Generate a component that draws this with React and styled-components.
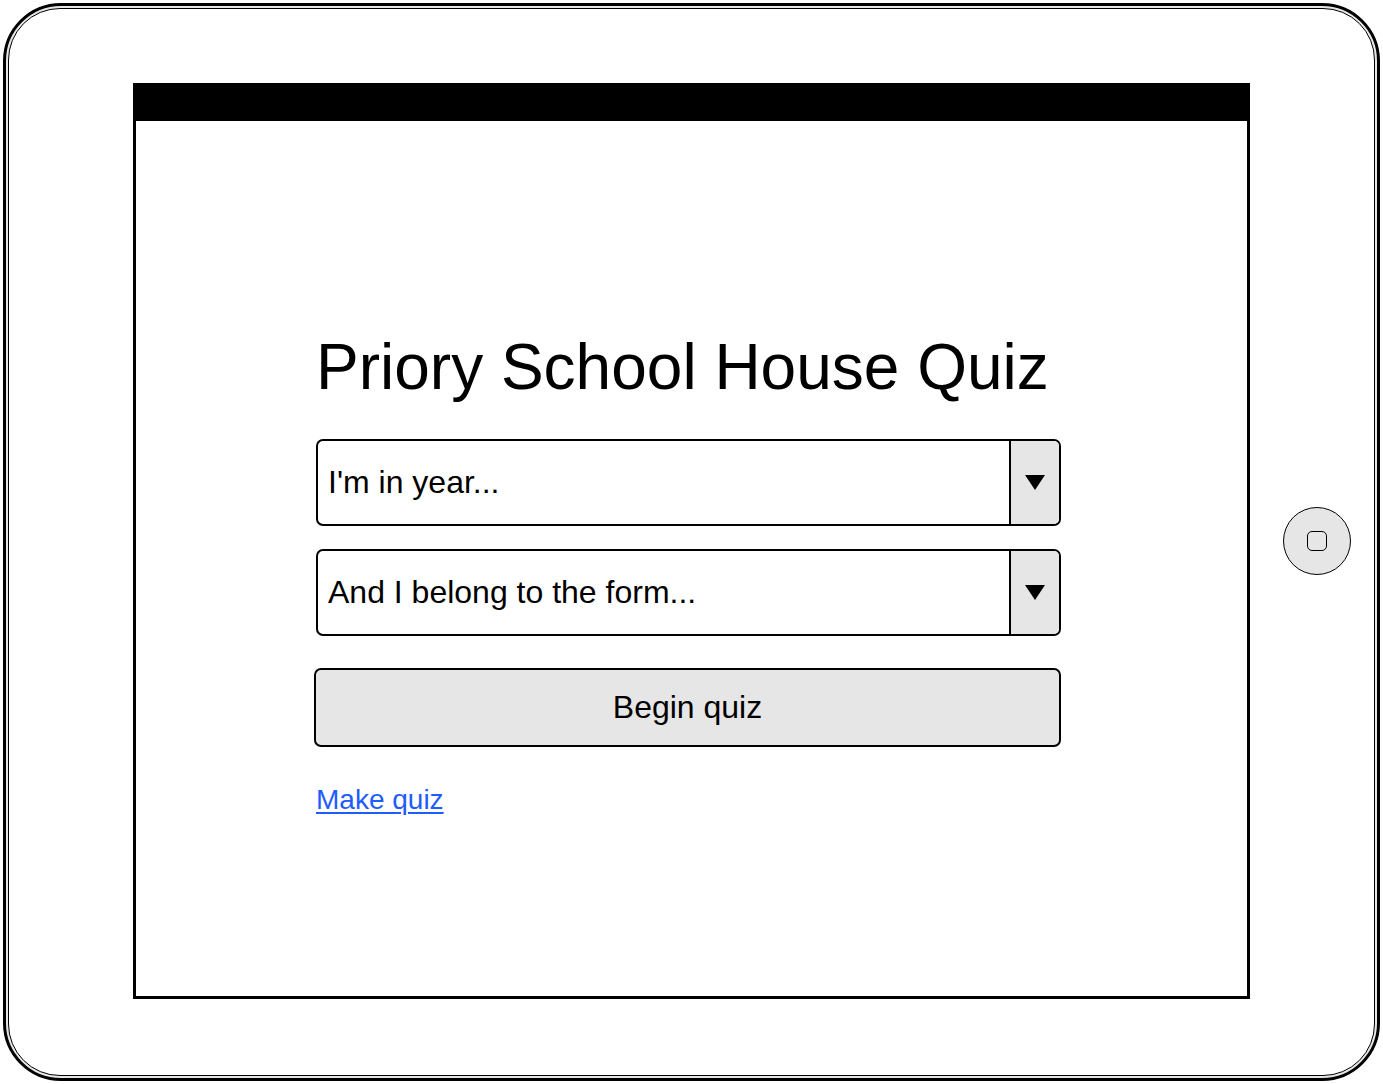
import React from 'react';
import styled, { createGlobalStyle } from 'styled-components';

const GlobalStyle = createGlobalStyle`
  html, body {
    margin: 0;
    padding: 0;
    background: #fff;
  }
  body {
    font-family: "Liberation Sans", Arial, sans-serif;
    color: #000;
  }
`;

const Page = styled.div`
  width: 1383px;
  height: 1084px;
  padding: 3px;
  box-sizing: border-box;
`;

const Device = styled.div`
  height: 100%;
  box-sizing: border-box;
  border: 3px solid #000;
  border-radius: 58px;
  background: #e6e6e6;
  padding: 2px;
`;

const DeviceInner = styled.div`
  height: 100%;
  box-sizing: border-box;
  border: 1.5px solid #000;
  border-radius: 52px;
  background: #fff;
  display: flex;
  align-items: center;
  padding-left: 124px;
  padding-bottom: 3px;
`;

const Screen = styled.div`
  width: 1117px;
  height: 916px;
  box-sizing: border-box;
  border: 3px solid #000;
  display: flex;
  flex-direction: column;
`;

const StatusBar = styled.div`
  height: 35px;
  background: #000;
`;

const Content = styled.div`
  flex: 1;
  display: flex;
  flex-direction: column;
  align-items: flex-start;
  padding: 209px 0 0 180px;
`;

const Title = styled.h1`
  margin: 0 0 35px;
  font-size: 64px;
  font-weight: normal;
  line-height: normal;
`;

const Select = styled.div`
  width: 745px;
  height: 87px;
  box-sizing: border-box;
  border: 2px solid #000;
  border-radius: 7px;
  display: flex;
  overflow: hidden;
  margin-bottom: ${(p) => p.$gap}px;
`;

const SelectLabel = styled.div`
  flex: 1;
  display: flex;
  align-items: center;
  padding-left: 10px;
  font-size: 32px;
`;

const SelectArrow = styled.div`
  width: 48px;
  border-left: 2px solid #000;
  background: #e6e6e6;
  display: flex;
  align-items: center;
  justify-content: center;
  &::after {
    content: '';
    border-left: 10px solid transparent;
    border-right: 10px solid transparent;
    border-top: 15px solid #000;
  }
`;

const BeginButton = styled.button`
  width: 747px;
  height: 79px;
  margin-left: -2px;
  box-sizing: border-box;
  border: 2px solid #000;
  border-radius: 7px;
  background: #e6e6e6;
  font-family: "Liberation Sans", Arial, sans-serif;
  font-size: 32px;
  color: #000;
  padding: 0;
  margin-bottom: 37px;
`;

const Link = styled.a`
  font-size: 28px;
  color: #1f5cff;
  text-decoration: underline;
  text-underline-offset: 3px;
  text-decoration-thickness: 2px;
`;

const Side = styled.div`
  flex: 1;
  display: flex;
  justify-content: center;
  padding-left: 9px;
`;

const HomeButton = styled.div`
  width: 68px;
  height: 68px;
  box-sizing: border-box;
  border: 1.5px solid #000;
  border-radius: 50%;
  background: #e6e6e6;
  display: flex;
  align-items: center;
  justify-content: center;
  &::after {
    content: '';
    width: 20px;
    height: 20px;
    box-sizing: border-box;
    border: 1.5px solid #000;
    border-radius: 5px;
  }
`;

export default function App() {
  return (
    <>
      <GlobalStyle />
      <Page>
        <Device>
          <DeviceInner>
            <Screen>
              <StatusBar />
              <Content>
                <Title>Priory School House Quiz</Title>
                <Select $gap={23}>
                  <SelectLabel>I'm in year...</SelectLabel>
                  <SelectArrow />
                </Select>
                <Select $gap={32}>
                  <SelectLabel>And I belong to the form...</SelectLabel>
                  <SelectArrow />
                </Select>
                <BeginButton>Begin quiz</BeginButton>
                <Link href="#">Make quiz</Link>
              </Content>
            </Screen>
            <Side>
              <HomeButton />
            </Side>
          </DeviceInner>
        </Device>
      </Page>
    </>
  );
}
